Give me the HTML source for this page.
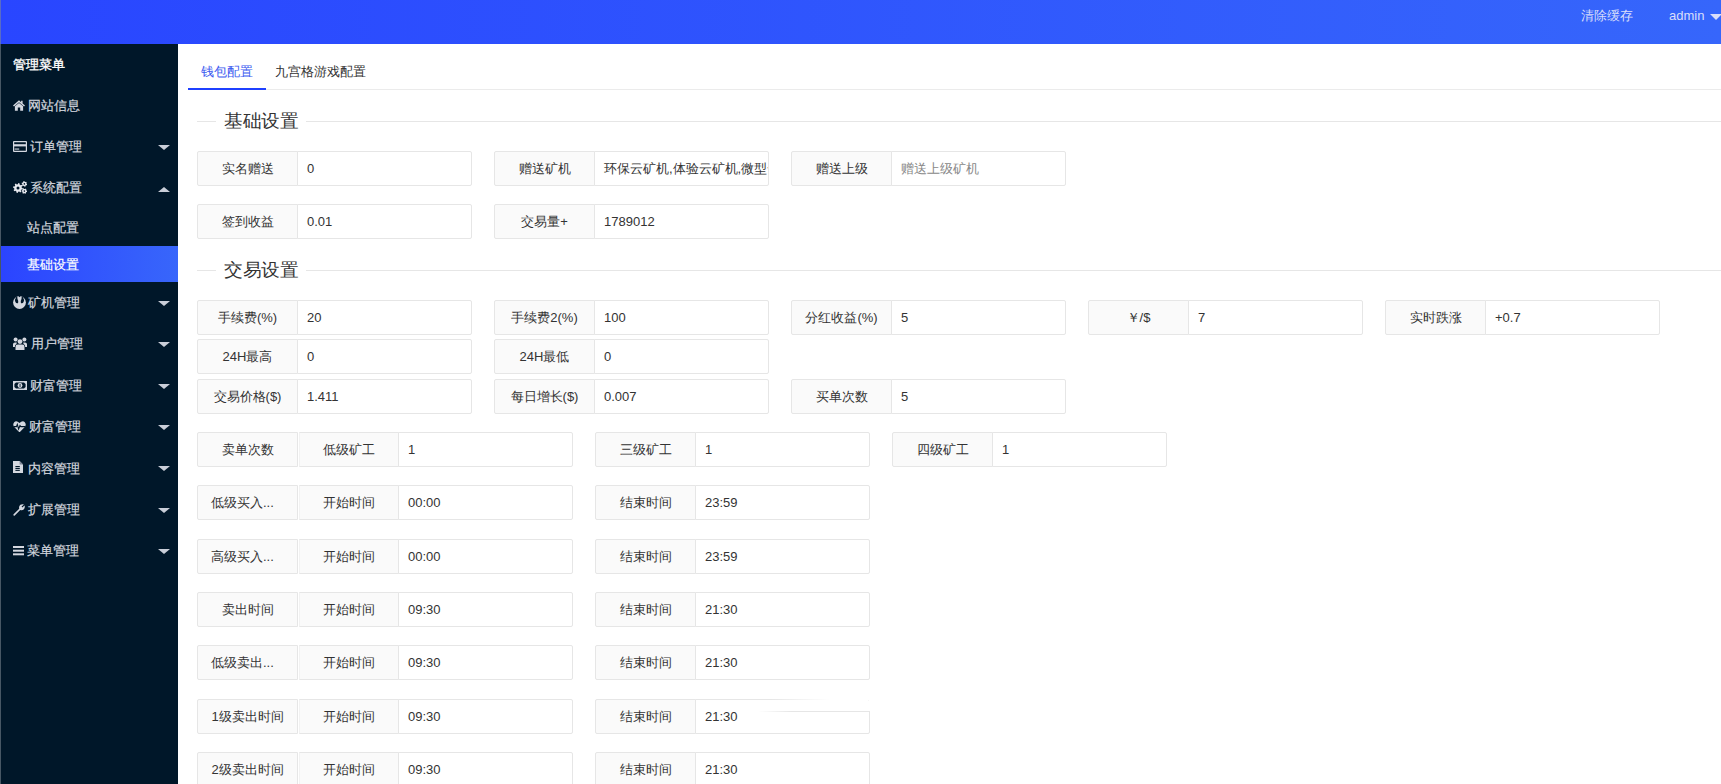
<!DOCTYPE html><html><head><meta charset="utf-8"><style>
*{box-sizing:border-box;margin:0;padding:0}
html,body{width:1721px;height:784px;overflow:hidden;background:#fff;font-family:"Liberation Sans",sans-serif;font-size:13px;color:#333}
.ab{position:absolute;white-space:nowrap}
#hdr{position:absolute;left:0;top:0;width:1721px;height:44px;background:linear-gradient(to right,#2946ff,#3666fb)}
#side{position:absolute;left:0;top:44px;width:178px;height:740px;background:#001729}
#sideb{position:absolute;left:0;top:0;width:1px;height:784px;background:rgba(130,140,150,0.55);z-index:5}
.si{position:absolute;color:#d7dbe2;font-size:13px;line-height:16px;white-space:nowrap;-webkit-text-stroke:0.2px currentColor}
.tri{position:absolute;width:0;height:0;border-left:5px solid transparent;border-right:5px solid transparent}
.lb{position:absolute;height:35px;border:1px solid #e6e6e6;background:#fafafa;text-align:center;line-height:34px;font-size:13px;color:#333;white-space:nowrap;border-radius:2px 0 0 2px}
.in{position:absolute;height:35px;border:1px solid #e6e6e6;background:#fff;padding-left:9px;line-height:34px;font-size:13px;color:#333;white-space:nowrap;overflow:hidden;border-radius:0 2px 2px 0}
.ph{color:#888}
</style></head><body>
<div id="hdr"></div>
<div class="ab" style="left:1581px;top:8px;color:#d9defa;font-size:13px;line-height:16px">清除缓存</div>
<div class="ab" style="left:1669px;top:8px;color:#d9defa;font-size:13px;line-height:16px">admin</div>
<div class="tri" style="left:1710px;top:14px;border-left:6px solid transparent;border-right:6px solid transparent;border-top:6px solid #d9defa"></div>
<div id="side"></div><div id="sideb"></div>
<div class="ab" style="left:1px;top:246px;width:177px;height:36px;background:linear-gradient(to right,#2b44ff,#3866fb)"></div>
<div class="si" style="left:12.6px;top:56.5px;color:#fff;font-weight:500;-webkit-text-stroke:0.35px #fff">管理菜单</div>
<svg class="ab" style="left:13px;top:99.5px" width="12" height="11" viewBox="0 0 12 11"><path d="M6 0.3L0 5.6L1 6.6L6 2.2L11 6.6L12 5.6L9.6 3.5V0.8H8.1V2.2Z" fill="#d4d8e0"/><path d="M1.9 6.3L6 2.9L10.1 6.3V10.8H7.2V7.6H4.8V10.8H1.9Z" fill="#d4d8e0"/></svg>
<div class="si" style="left:28.3px;top:98.0px;color:#d2d6de">网站信息</div>
<svg class="ab" style="left:13px;top:141px" width="14" height="11" viewBox="0 0 14 11"><rect x="0.6" y="0.6" width="12.8" height="9.8" rx="0.4" fill="none" stroke="#d4d8e0" stroke-width="1.2"/><rect x="0.5" y="3.2" width="13" height="2.2" fill="#d4d8e0"/><rect x="1.6" y="7.5" width="4.6" height="1.1" fill="#d4d8e0"/></svg>
<div class="si" style="left:30.3px;top:139.2px;color:#d2d6de">订单管理</div>
<div class="tri" style="left:158px;top:144.9px;border-left:6px solid transparent;border-right:6px solid transparent;border-top:5.5px solid #c9ced8"></div>
<svg class="ab" style="left:13px;top:181px" width="14" height="13" viewBox="0 0 14 13"><path fill-rule="evenodd" d="M8.80 6.86 L9.89 7.25 L9.60 8.68 L8.45 8.60 L7.78 9.59 L8.28 10.64 L7.07 11.44 L6.30 10.57 L5.14 10.80 L4.75 11.89 L3.32 11.60 L3.40 10.45 L2.41 9.78 L1.36 10.28 L0.56 9.07 L1.43 8.30 L1.20 7.14 L0.11 6.75 L0.40 5.32 L1.55 5.40 L2.22 4.41 L1.72 3.36 L2.93 2.56 L3.70 3.43 L4.86 3.20 L5.25 2.11 L6.68 2.40 L6.60 3.55 L7.59 4.22 L8.64 3.72 L9.44 4.93 L8.57 5.70Z M6.50 7.00 A1.5 1.5 0 1 0 3.50 7.00 A1.5 1.5 0 1 0 6.50 7.00Z" fill="#e6e8ee"/><path fill-rule="evenodd" d="M13.60 2.87 L14.19 3.18 L13.86 4.24 L13.20 4.17 L12.53 4.79 L12.55 5.45 L11.47 5.70 L11.20 5.09 L10.33 4.82 L9.76 5.17 L9.01 4.36 L9.40 3.82 L9.20 2.93 L8.61 2.62 L8.94 1.56 L9.60 1.63 L10.27 1.01 L10.25 0.35 L11.33 0.10 L11.60 0.71 L12.47 0.98 L13.04 0.63 L13.79 1.44 L13.40 1.98Z M12.20 2.90 A0.8 0.8 0 1 0 10.60 2.90 A0.8 0.8 0 1 0 12.20 2.90Z" fill="#e6e8ee"/><path fill-rule="evenodd" d="M13.55 9.63 L14.19 9.82 L14.08 10.92 L13.41 10.99 L12.88 11.73 L13.03 12.37 L12.02 12.83 L11.64 12.29 L10.73 12.20 L10.25 12.65 L9.35 12.00 L9.63 11.40 L9.25 10.57 L8.61 10.38 L8.72 9.28 L9.39 9.21 L9.92 8.47 L9.77 7.83 L10.78 7.37 L11.16 7.91 L12.07 8.00 L12.55 7.55 L13.45 8.20 L13.17 8.80Z M12.20 10.10 A0.8 0.8 0 1 0 10.60 10.10 A0.8 0.8 0 1 0 12.20 10.10Z" fill="#e6e8ee"/></svg>
<div class="si" style="left:29.6px;top:180.3px;color:#d2d6de">系统配置</div>
<div class="tri" style="left:158px;top:186.5px;border-left:6px solid transparent;border-right:6px solid transparent;border-bottom:5.5px solid #c9ced8"></div>
<div class="si" style="left:27.3px;top:220.0px;color:#d2d6de">站点配置</div>
<div class="si" style="left:27.3px;top:256.8px;color:#fff">基础设置</div>
<svg class="ab" style="left:13px;top:296px" width="13" height="13" viewBox="0 0 13 13"><circle cx="6.5" cy="6.5" r="6.4" fill="#d4d8e0"/><path d="M3.2 0.9Q1.4 3.4 2.4 6Q3.4 8 5.1 7Q5.6 5 4.6 3.2Q4.2 2 4.4 0.5Z" fill="#001729"/><path d="M9.8 0.9Q11.6 3.4 10.6 6Q9.6 8 7.9 7Q7.4 5 8.4 3.2Q8.8 2 8.6 0.5Z" fill="#001729"/><path d="M5.3 0L6.5 1.2L7.7 0Z" fill="#001729"/></svg>
<div class="si" style="left:28.3px;top:295.1px;color:#d2d6de">矿机管理</div>
<div class="tri" style="left:158px;top:300.8px;border-left:6px solid transparent;border-right:6px solid transparent;border-top:5.5px solid #c9ced8"></div>
<svg class="ab" style="left:13px;top:337px" width="14" height="13" viewBox="0 0 14 13"><circle cx="2.6" cy="2.6" r="2" fill="#d4d8e0"/><circle cx="11.4" cy="2.6" r="2" fill="#d4d8e0"/><circle cx="7" cy="4.6" r="2.4" fill="#d4d8e0"/><path d="M2.5 13V9.8Q2.5 7.4 4.8 7.4H9.2Q11.5 7.4 11.5 9.8V13Z" fill="#d4d8e0"/><path d="M0 10V7.2Q0 5.4 2 5.4H3.8Q3.4 6.2 3.6 7Q1.8 7.6 1.8 10Z" fill="#d4d8e0"/><path d="M14 10V7.2Q14 5.4 12 5.4H10.2Q10.6 6.2 10.4 7Q12.2 7.6 12.2 10Z" fill="#d4d8e0"/></svg>
<div class="si" style="left:30.6px;top:336.1px;color:#d2d6de">用户管理</div>
<div class="tri" style="left:158px;top:341.8px;border-left:6px solid transparent;border-right:6px solid transparent;border-top:5.5px solid #c9ced8"></div>
<svg class="ab" style="left:13px;top:381px" width="14" height="9" viewBox="0 0 14 9"><rect x="0" y="0" width="14" height="9" fill="#d4d8e0"/><path d="M3 1.4H11L12.6 3V6L11 7.6H3L1.4 6V3Z" fill="#001729"/><circle cx="7" cy="4.5" r="2.4" fill="#d4d8e0"/><rect x="6.6" y="3" width="0.9" height="3" fill="#001729"/></svg>
<div class="si" style="left:29.9px;top:378.2px;color:#d2d6de">财富管理</div>
<div class="tri" style="left:158px;top:383.9px;border-left:6px solid transparent;border-right:6px solid transparent;border-top:5.5px solid #c9ced8"></div>
<svg class="ab" style="left:13px;top:420.5px" width="13" height="11.5" viewBox="0 0 13 11.5"><path d="M6.5 11.4L1 5.8Q-0.6 3.4 1.2 1.2Q3.4 -0.8 6.5 2Q9.6 -0.8 11.8 1.2Q13.6 3.4 12 5.8Z" fill="#d4d8e0"/><path d="M0.8 5.6H3.4L4.3 3.4L5.6 8L7 4.6L7.8 5.6H12.2" fill="none" stroke="#001729" stroke-width="1.1"/></svg>
<div class="si" style="left:29.1px;top:419.0px;color:#d2d6de">财富管理</div>
<div class="tri" style="left:158px;top:424.7px;border-left:6px solid transparent;border-right:6px solid transparent;border-top:5.5px solid #c9ced8"></div>
<svg class="ab" style="left:13px;top:461px" width="10" height="12" viewBox="0 0 10 12"><path d="M0 0H6.6L10 3.4V12H0Z" fill="#d4d8e0"/><path d="M6.6 0V3.4H10Z" fill="#7d8696"/><rect x="2.4" y="5" width="4.4" height="1.1" fill="#001729"/><rect x="2.4" y="6.9" width="4.4" height="1.1" fill="#001729"/><rect x="2.4" y="8.8" width="4.4" height="1.1" fill="#001729"/></svg>
<div class="si" style="left:28.0px;top:460.6px;color:#d2d6de">内容管理</div>
<div class="tri" style="left:158px;top:466.3px;border-left:6px solid transparent;border-right:6px solid transparent;border-top:5.5px solid #c9ced8"></div>
<svg class="ab" style="left:13px;top:503.5px" width="12" height="12" viewBox="0 0 12 12"><path d="M0.6 10.2L6.2 4.8Q5.6 2.2 7.4 0.8Q9 -0.2 11 0.5L8.6 2.6L9.2 3.6L11.6 1.6Q12.2 3.6 10.9 5.2Q9.4 6.8 7.2 6L1.8 11.5Q1.2 12 0.6 11.4Q0.1 10.8 0.6 10.2Z" fill="#d4d8e0"/></svg>
<div class="si" style="left:28.0px;top:502.0px;color:#d2d6de">扩展管理</div>
<div class="tri" style="left:158px;top:507.7px;border-left:6px solid transparent;border-right:6px solid transparent;border-top:5.5px solid #c9ced8"></div>
<svg class="ab" style="left:13px;top:545.8px" width="11" height="10" viewBox="0 0 11 10"><rect x="0" y="0" width="11" height="2" fill="#d4d8e0"/><rect x="0" y="3.7" width="11" height="2" fill="#d4d8e0"/><rect x="0" y="7.3" width="11" height="2" fill="#d4d8e0"/></svg>
<div class="si" style="left:26.8px;top:542.8px;color:#d2d6de">菜单管理</div>
<div class="tri" style="left:158px;top:548.5px;border-left:6px solid transparent;border-right:6px solid transparent;border-top:5.5px solid #c9ced8"></div>
<div class="ab" style="left:201px;top:63.5px;font-size:13px;line-height:16px;color:#3d5bf0">钱包配置</div>
<div class="ab" style="left:275px;top:63.5px;font-size:13px;line-height:16px;color:#333">九宫格游戏配置</div>
<div class="ab" style="left:188px;top:89px;width:1533px;height:1px;background:#ebebeb"></div>
<div class="ab" style="left:188px;top:88px;width:78px;height:2px;background:#1f40ff"></div>
<div class="ab" style="left:197px;top:121px;width:1524px;height:1px;background:#e6e6e6"></div>
<div class="ab" style="left:216px;top:110px;width:90px;height:22px;background:#fff"></div>
<div class="ab" style="left:224px;top:109.5px;font-size:18px;line-height:22px;color:#333;transform:scaleX(1.04);transform-origin:0 0">基础设置</div>
<div class="ab" style="left:197px;top:270px;width:1524px;height:1px;background:#e6e6e6"></div>
<div class="ab" style="left:216px;top:259px;width:90px;height:22px;background:#fff"></div>
<div class="ab" style="left:224px;top:258.5px;font-size:18px;line-height:22px;color:#333;transform:scaleX(1.04);transform-origin:0 0">交易设置</div>
<div class="lb" style="left:197px;top:151px;width:101px">实名赠送</div>
<div class="in" style="left:297px;top:151px;width:175px"><span>0</span></div>
<div class="lb" style="left:494px;top:151px;width:101px">赠送矿机</div>
<div class="in" style="left:594px;top:151px;width:175px"><span>环保云矿机,体验云矿机,微型云矿机</span></div>
<div class="lb" style="left:791px;top:151px;width:101px">赠送上级</div>
<div class="in" style="left:891px;top:151px;width:175px"><span class=ph>赠送上级矿机</span></div>
<div class="lb" style="left:197px;top:204px;width:101px">签到收益</div>
<div class="in" style="left:297px;top:204px;width:175px"><span>0.01</span></div>
<div class="lb" style="left:494px;top:204px;width:101px">交易量+</div>
<div class="in" style="left:594px;top:204px;width:175px"><span>1789012</span></div>
<div class="lb" style="left:197px;top:300px;width:101px">手续费(%)</div>
<div class="in" style="left:297px;top:300px;width:175px"><span>20</span></div>
<div class="lb" style="left:494px;top:300px;width:101px">手续费2(%)</div>
<div class="in" style="left:594px;top:300px;width:175px"><span>100</span></div>
<div class="lb" style="left:791px;top:300px;width:101px">分红收益(%)</div>
<div class="in" style="left:891px;top:300px;width:175px"><span>5</span></div>
<div class="lb" style="left:1088px;top:300px;width:101px">￥/$</div>
<div class="in" style="left:1188px;top:300px;width:175px"><span>7</span></div>
<div class="lb" style="left:1385px;top:300px;width:101px">实时跌涨</div>
<div class="in" style="left:1485px;top:300px;width:175px"><span>+0.7</span></div>
<div class="lb" style="left:197px;top:339px;width:101px">24H最高</div>
<div class="in" style="left:297px;top:339px;width:175px"><span>0</span></div>
<div class="lb" style="left:494px;top:339px;width:101px">24H最低</div>
<div class="in" style="left:594px;top:339px;width:175px"><span>0</span></div>
<div class="lb" style="left:197px;top:379px;width:101px">交易价格($)</div>
<div class="in" style="left:297px;top:379px;width:175px"><span>1.411</span></div>
<div class="lb" style="left:494px;top:379px;width:101px">每日增长($)</div>
<div class="in" style="left:594px;top:379px;width:175px"><span>0.007</span></div>
<div class="lb" style="left:791px;top:379px;width:101px">买单次数</div>
<div class="in" style="left:891px;top:379px;width:175px"><span>5</span></div>
<div class="lb" style="left:197px;top:432px;width:101px">卖单次数</div>
<div class="lb" style="left:299px;top:432px;width:100px;border-left-color:#f2f2f2;border-radius:0">低级矿工</div>
<div class="in" style="left:398px;top:432px;width:175px">1</div>
<div class="lb" style="left:595px;top:432px;width:101px">三级矿工</div>
<div class="in" style="left:695px;top:432px;width:175px"><span>1</span></div>
<div class="lb" style="left:892px;top:432px;width:101px">四级矿工</div>
<div class="in" style="left:992px;top:432px;width:175px"><span>1</span></div>
<div class="lb" style="left:197px;top:485px;width:101px;text-align:left;padding-left:13px">低级买入...</div>
<div class="lb" style="left:299px;top:485px;width:100px;border-left-color:#f2f2f2;border-radius:0">开始时间</div>
<div class="in" style="left:398px;top:485px;width:175px">00:00</div>
<div class="lb" style="left:595px;top:485px;width:101px">结束时间</div>
<div class="in" style="left:695px;top:485px;width:175px"><span>23:59</span></div>
<div class="lb" style="left:197px;top:539px;width:101px;text-align:left;padding-left:13px">高级买入...</div>
<div class="lb" style="left:299px;top:539px;width:100px;border-left-color:#f2f2f2;border-radius:0">开始时间</div>
<div class="in" style="left:398px;top:539px;width:175px">00:00</div>
<div class="lb" style="left:595px;top:539px;width:101px">结束时间</div>
<div class="in" style="left:695px;top:539px;width:175px"><span>23:59</span></div>
<div class="lb" style="left:197px;top:592px;width:101px">卖出时间</div>
<div class="lb" style="left:299px;top:592px;width:100px;border-left-color:#f2f2f2;border-radius:0">开始时间</div>
<div class="in" style="left:398px;top:592px;width:175px">09:30</div>
<div class="lb" style="left:595px;top:592px;width:101px">结束时间</div>
<div class="in" style="left:695px;top:592px;width:175px"><span>21:30</span></div>
<div class="lb" style="left:197px;top:645px;width:101px;text-align:left;padding-left:13px">低级卖出...</div>
<div class="lb" style="left:299px;top:645px;width:100px;border-left-color:#f2f2f2;border-radius:0">开始时间</div>
<div class="in" style="left:398px;top:645px;width:175px">09:30</div>
<div class="lb" style="left:595px;top:645px;width:101px">结束时间</div>
<div class="in" style="left:695px;top:645px;width:175px"><span>21:30</span></div>
<div class="lb" style="left:197px;top:699px;width:101px">1级卖出时间</div>
<div class="lb" style="left:299px;top:699px;width:100px;border-left-color:#f2f2f2;border-radius:0">开始时间</div>
<div class="in" style="left:398px;top:699px;width:175px">09:30</div>
<div class="lb" style="left:595px;top:699px;width:101px">结束时间</div>
<div class="in" style="left:695px;top:699px;width:175px"><span>21:30</span></div>
<div class="lb" style="left:197px;top:752px;width:101px">2级卖出时间</div>
<div class="lb" style="left:299px;top:752px;width:100px;border-left-color:#f2f2f2;border-radius:0">开始时间</div>
<div class="in" style="left:398px;top:752px;width:175px">09:30</div>
<div class="lb" style="left:595px;top:752px;width:101px">结束时间</div>
<div class="in" style="left:695px;top:752px;width:175px"><span>21:30</span></div>
<div class="ab" style="left:700px;top:699px;width:170px;height:1px;background:#fff"></div>
<div class="ab" style="left:869px;top:700px;width:1px;height:11px;background:#fff"></div>
<div class="ab" style="left:700px;top:699px;width:130px;height:1px;background:linear-gradient(to right,#e6e6e6 0%,#e6e6e6 55%,rgba(230,230,230,0) 100%)"></div>
<div class="ab" style="left:758px;top:711px;width:111px;height:1px;background:linear-gradient(to right,rgba(230,230,230,0) 0%,#e6e6e6 30%,#e6e6e6 100%)"></div>
</body></html>
